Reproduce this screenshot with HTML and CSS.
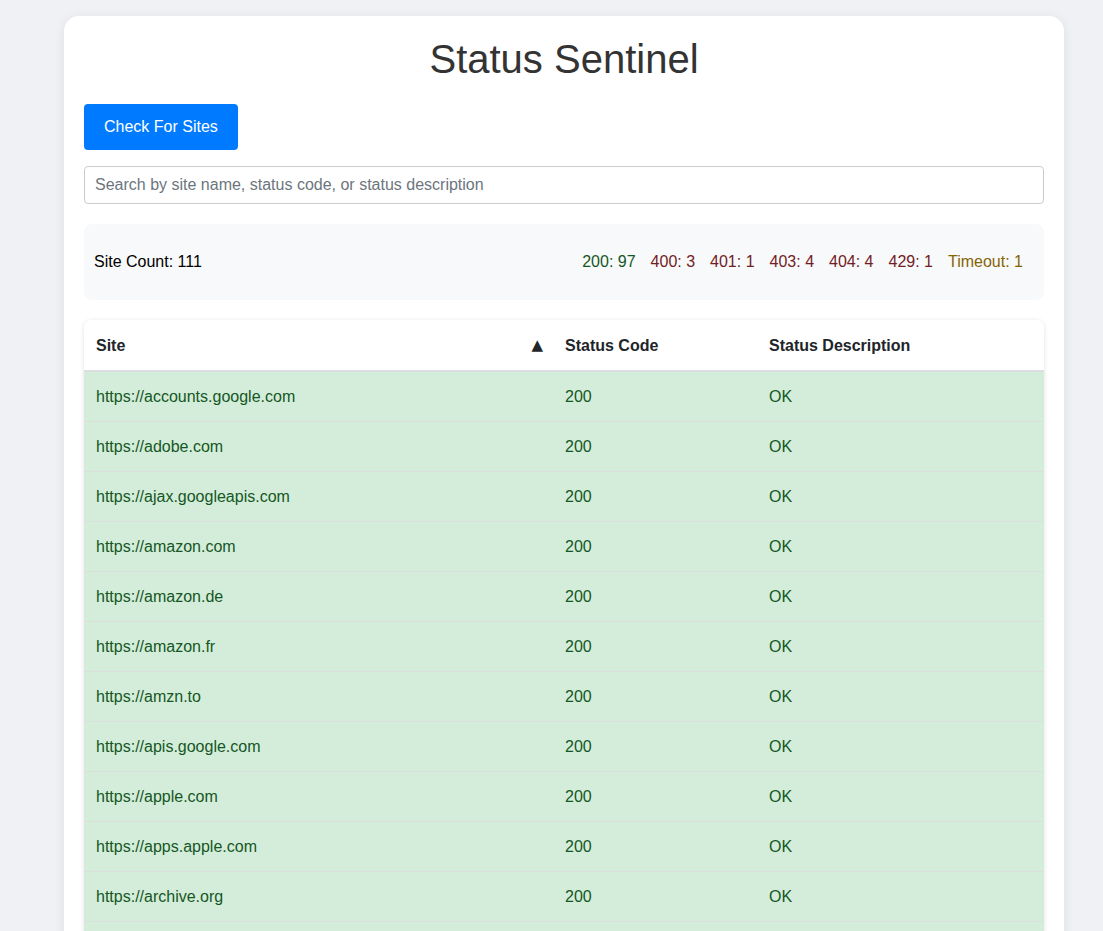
FILE: index.html
```html
<!DOCTYPE html>
<html lang="en">
<head>
<meta charset="utf-8">
<title>Status Sentinel</title>
<link rel="stylesheet" href="styles.css">
</head>
<body>
<main class="container">
  <h1 class="title">Status Sentinel</h1>
  <button class="btn-check" type="button">Check For Sites</button>
  <input class="search" type="text" placeholder="Search by site name, status code, or status description">
  <section class="stats">
    <div class="site-count">Site Count: 111</div>
    <div class="status-counts">
      <span class="count ok">200: 97</span>
      <span class="count err">400: 3</span>
      <span class="count err">401: 1</span>
      <span class="count err">403: 4</span>
      <span class="count err">404: 4</span>
      <span class="count err">429: 1</span>
      <span class="count warn">Timeout: 1</span>
    </div>
  </section>
  <div class="table-wrap">
    <table class="sites">
      <thead>
        <tr>
          <th class="col-site"><div class="th-inner"><span>Site</span><span class="sort">▲</span></div></th>
          <th class="col-code">Status Code</th>
          <th class="col-desc">Status Description</th>
        </tr>
      </thead>
      <tbody>
        <tr class="row-ok"><td>https://accounts.google.com</td><td>200</td><td>OK</td></tr>
        <tr class="row-ok"><td>https://adobe.com</td><td>200</td><td>OK</td></tr>
        <tr class="row-ok"><td>https://ajax.googleapis.com</td><td>200</td><td>OK</td></tr>
        <tr class="row-ok"><td>https://amazon.com</td><td>200</td><td>OK</td></tr>
        <tr class="row-ok"><td>https://amazon.de</td><td>200</td><td>OK</td></tr>
        <tr class="row-ok"><td>https://amazon.fr</td><td>200</td><td>OK</td></tr>
        <tr class="row-ok"><td>https://amzn.to</td><td>200</td><td>OK</td></tr>
        <tr class="row-ok"><td>https://apis.google.com</td><td>200</td><td>OK</td></tr>
        <tr class="row-ok"><td>https://apple.com</td><td>200</td><td>OK</td></tr>
        <tr class="row-ok"><td>https://apps.apple.com</td><td>200</td><td>OK</td></tr>
        <tr class="row-ok"><td>https://archive.org</td><td>200</td><td>OK</td></tr>
        <tr class="row-ok"><td>https://bbc.co.uk</td><td>200</td><td>OK</td></tr>
      </tbody>
    </table>
  </div>
</main>
</body>
</html>
```

FILE: styles.css
```css
html, body {
  margin: 0;
  padding: 0;
}
body {
  background: #f0f1f5;
  font-family: "Liberation Sans", Arial, sans-serif;
  color: #212529;
  padding: 16px 39px 0 64px;
  height: 931px;
  overflow: hidden;
  box-sizing: border-box;
}
.container {
  width: 1000px;
  box-sizing: border-box;
  background: #fff;
  border-radius: 15px;
  padding: 20px 20px 40px;
  box-shadow: 0 2px 12px rgba(0, 0, 0, 0.08);
  display: flex;
  flex-direction: column;
  align-items: flex-start;
}
.title {
  align-self: stretch;
  text-align: center;
  margin: 0 0 22px;
  font-size: 40px;
  font-weight: normal;
  line-height: 46px;
  color: #333;
}
.btn-check {
  background: #007bff;
  color: #fff;
  border: none;
  border-radius: 4px;
  font-family: inherit;
  font-size: 16px;
  line-height: 18px;
  height: 46px;
  padding: 0 20px;
  white-space: nowrap;
  cursor: pointer;
  margin-bottom: 16px;
}
.search {
  align-self: stretch;
  box-sizing: border-box;
  height: 38px;
  border: 1px solid #ccc;
  border-radius: 4px;
  padding: 0 10px;
  font-family: inherit;
  font-size: 16px;
  color: #333;
  margin: 0 0 20px;
}
.search::placeholder {
  color: #6c757d;
}
.stats {
  align-self: stretch;
  background: #f8f9fa;
  border-radius: 8px;
  display: flex;
  justify-content: space-between;
  align-items: center;
  padding: 29px 21px 29px 10px;
  font-size: 16px;
  line-height: 18px;
  margin-bottom: 20px;
}
.site-count {
  color: #000;
}
.status-counts {
  display: flex;
  gap: 15px;
}
.count.ok { color: #155724; }
.count.err { color: #721c24; }
.count.warn { color: #856404; }
.table-wrap {
  align-self: stretch;
  border-radius: 8px;
  overflow: hidden;
  box-shadow: 0 1px 5px rgba(0, 0, 0, 0.12);
}
.sites {
  width: 100%;
  border-collapse: separate;
  border-spacing: 0;
  font-size: 16px;
  table-layout: fixed;
}
.sites th {
  box-sizing: border-box;
  text-align: left;
  font-weight: bold;
  color: #212529;
  background: #fff;
  padding: 17px 12px 16px;
  line-height: 17px;
  border-bottom: 2px solid #dcdde0;
}
.col-site { width: 469px; }
.col-code { width: 204px; }
.th-inner {
  display: flex;
  justify-content: space-between;
  align-items: center;
}
.sort {
  font-family: "DejaVu Sans", sans-serif;
  font-size: 15px;
  line-height: 17px;
  margin-right: -2px;
}
.sites td {
  padding: 16px 12px;
  line-height: 17px;
  border-bottom: 1px solid #dcdedc;
}
.row-ok td {
  background: #d4edda;
  color: #155724;
}
```
